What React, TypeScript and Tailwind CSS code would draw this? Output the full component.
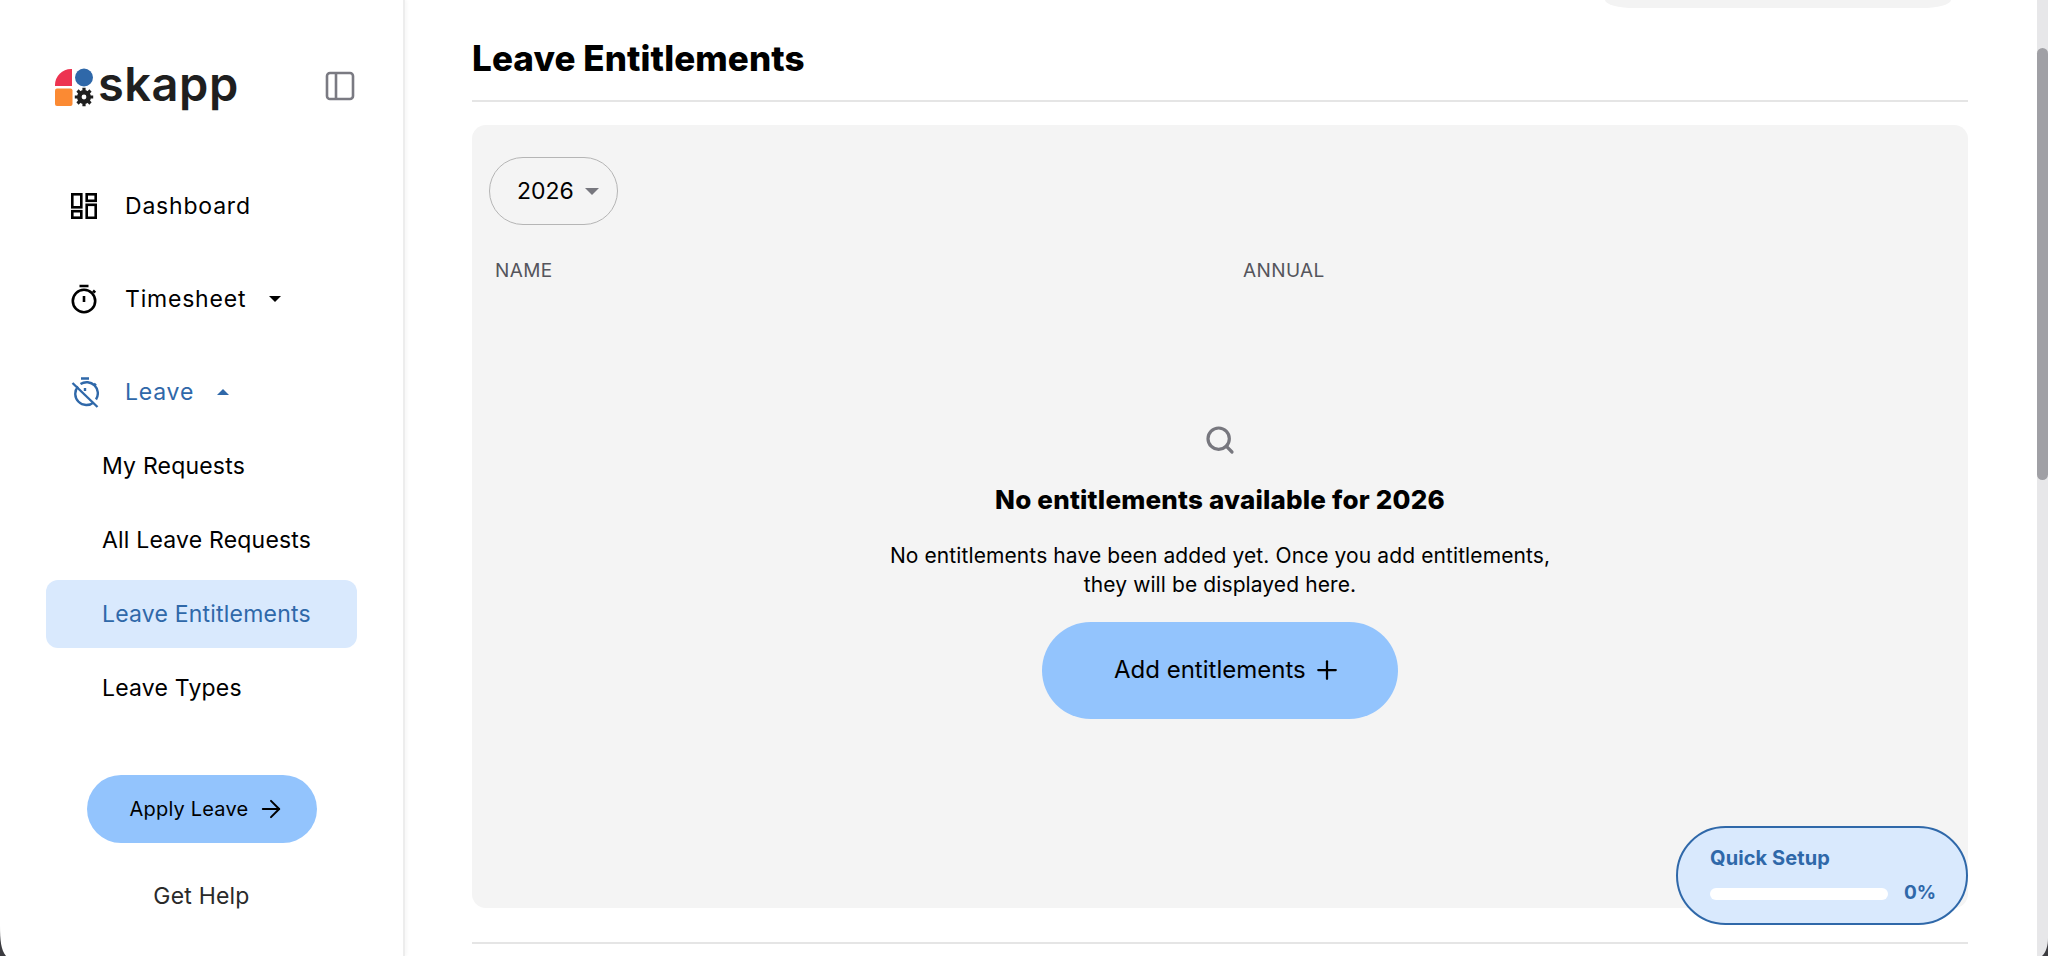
import { ArrowRight, Plus, Search } from "lucide-react";

const font = "font-['Inter','Liberation_Sans',sans-serif]";

function SkappLogo() {
  return (
    <svg width="40" height="40" viewBox="0 0 40 40" className="shrink-0 translate-y-[2px]">
      <path d="M1 18V17A16 16 0 0 1 17 1H18V18Z" fill="#ED3350" />
      <rect x="1" y="20.5" width="17.5" height="17.5" rx="2" fill="#FB8A33" />
      <circle cx="30" cy="9.500" r="9" fill="#2F68A9" />
      <circle cx="30" cy="29" r="4.700" fill="none" stroke="#1F1F1F" strokeWidth="4.600" />
      <path
        d="M30 19.800v4M30 34.200v4M20.800 29h4M35.200 29h4M23.500 22.500l2.800 2.800M33.700 32.700l2.800 2.800M23.500 35.500l2.800-2.800M33.700 25.300l2.800-2.800"
        stroke="#1F1F1F"
        strokeWidth="3.200"
      />
    </svg>
  );
}

function PanelIcon() {
  return (
    <svg width="30" height="30" viewBox="0 0 30 30" fill="none" stroke="#7A7A82" strokeWidth="2.600">
      <rect x="2" y="2" width="26" height="26" rx="3" />
      <path d="M11 2v26" />
    </svg>
  );
}

function DashboardIcon() {
  return (
    <svg width="26" height="26" viewBox="0 0 26 26" fill="none" stroke="#000" strokeWidth="2.600">
      <rect x="1.300" y="1.300" width="9" height="13" />
      <rect x="15.700" y="1.300" width="9" height="6.500" />
      <rect x="1.300" y="18.200" width="9" height="6.500" />
      <rect x="15.700" y="11.800" width="9" height="13" />
    </svg>
  );
}

function TimerIcon() {
  return (
    <svg width="26" height="30" viewBox="0 0 26 30" fill="none" stroke="#000" strokeWidth="2.600">
      <circle cx="13" cy="17" r="11.200" />
      <path d="M8.500 2h9M13 12v6M22 6.500l2.200 2.200" />
    </svg>
  );
}

function TimerOffIcon() {
  return (
    <svg width="28" height="32" viewBox="0 0 28 32" fill="none" stroke="#2F68A9" strokeWidth="2.400">
      <path d="M10 2.500h8M14 12v3M23 7.500l2 2" />
      <path d="M7 10.500a11.200 11.200 0 0 0 15.800 15.800M25 23.500A11.200 11.200 0 0 0 9.500 8" />
      <path d="M1.500 7l25 24" />
    </svg>
  );
}

function Caret({ up, color, size = 12 }: { up?: boolean; color: string; size?: number }) {
  return (
    <svg width={size} height={size / 2} viewBox="0 0 12 6" fill={color}>
      <path d={up ? "M0 6 6 0l6 6Z" : "M0 0h12L6 6Z"} />
    </svg>
  );
}

function NavItem({
  icon,
  label,
  active,
  open,
  caret = true,
}: {
  icon: React.ReactNode;
  label: string;
  active?: boolean;
  open?: boolean;
  caret?: boolean;
}) {
  return (
    <div className={`flex h-[66px] items-center pl-[71px] ${active ? "text-[#2F68A9]" : "text-black"}`}>
      <span className="flex w-[54px] items-center">{icon}</span>
      <span className="text-[23px] tracking-[0.8px]">{label}</span>
      {caret && (
        <span className="ml-[23px] flex">
          <Caret up={open} color={active ? "#2F68A9" : "#000"} />
        </span>
      )}
    </div>
  );
}

function SubItem({ label, active }: { label: string; active?: boolean }) {
  return (
    <div
      className={`flex h-[68px] items-center rounded-[12px] pl-[56px] text-[23px] tracking-[0.2px] ${
        active ? "bg-[#D9E9FD] text-[#2F68A9]" : "text-black"
      }`}
    >
      {label}
    </div>
  );
}

function Sidebar() {
  return (
    <aside className="flex h-full w-[405px] shrink-0 flex-col border-r-2 border-[#EDEDED] bg-white shadow-[2px_0_3px_rgba(0,0,0,0.03)]">
      <div className="flex items-center justify-between pt-[66px] pl-[54px] pr-[48px]">
        <div className="flex items-center gap-[4px]">
          <SkappLogo />
          <span className="-translate-y-[2px] text-[47px] leading-[40px] font-semibold tracking-[0.5px] text-[#1F1F1F]">
            skapp
          </span>
        </div>
        <PanelIcon />
      </div>
      <nav className="mt-[67px] flex flex-col gap-[27px]">
        <NavItem icon={<DashboardIcon />} label="Dashboard" caret={false} />
        <NavItem icon={<TimerIcon />} label="Timesheet" />
        <NavItem icon={<TimerOffIcon />} label="Leave" active open />
      </nav>
      <div className="mt-[7px] flex flex-col gap-[6px] px-[46px]">
        <SubItem label="My Requests" />
        <SubItem label="All Leave Requests" />
        <SubItem label="Leave Entitlements" active />
        <SubItem label="Leave Types" />
      </div>
      <button className="mx-auto mt-[53px] flex h-[68px] w-[230px] items-center gap-[9px] rounded-full bg-[#93C4FD] pl-[43px] text-[20px] tracking-[0.2px] text-black">
        Apply Leave
        <ArrowRight size={28} strokeWidth={1.700} />
      </button>
      <div className="mt-[36px] text-center text-[23px] tracking-[0.2px] text-[#2A2A2A]">Get Help</div>
    </aside>
  );
}

function EmptyState() {
  return (
    <div className="mt-[138px] flex flex-col items-center text-center">
      <Search size={32} strokeWidth={2.400} color="#77777E" />
      <h2 className="mt-[24px] text-[26px] font-extrabold tracking-[0.2px] text-black">
        No entitlements available for 2026
      </h2>
      <p className="mt-[22px] text-[21px] leading-[29px] tracking-[0.1px] text-black">
        No entitlements have been added yet. Once you add entitlements,
        <br />
        they will be displayed here.
      </p>
      <button className="mt-[23px] flex h-[97px] w-[356px] items-center gap-[6px] rounded-full bg-[#93C4FD] pl-[72px] text-[24px] text-black">
        Add entitlements
        <Plus size={30} strokeWidth={1.800} />
      </button>
    </div>
  );
}

function QuickSetup() {
  return (
    <div className="absolute right-[80px] bottom-[31px] flex h-[99px] w-[292px] flex-col justify-center rounded-full border-2 border-[#2F68A9] bg-[#D9E9FD] pr-[24px] pl-[32px]">
      <div className="text-[20px] font-bold tracking-[0.1px] text-[#2F68A9]">Quick Setup</div>
      <div className="mt-[6px] flex items-center gap-[16px]">
        <div className="h-[12px] w-[178px] shrink-0 rounded-full bg-white" />
        <span className="text-[19px] font-bold text-[#2F68A9]">0%</span>
      </div>
    </div>
  );
}

function WindowCorners() {
  return (
    <>
      <svg className="absolute bottom-0 left-0" width="8" height="30" viewBox="0 0 8 30" fill="#3C3C40">
        <path d="M0 0C0 14 1 24 6 30H0Z" />
      </svg>
      <svg className="absolute right-0 bottom-0" width="6" height="18" viewBox="0 0 6 18" fill="#3C3C40">
        <path d="M6 0C6 8 4 14 0 18H6Z" />
      </svg>
    </>
  );
}

export default function App() {
  return (
    <div className={`relative flex h-[956px] w-[2048px] overflow-hidden bg-white ${font}`}>
      <Sidebar />
      <main className="flex h-full flex-1 flex-col pr-[69px] pl-[67px]">
        <div className="mr-[17px] ml-auto h-[8px] w-[346px] rounded-b-[30px_8px] bg-[#F3F3F3]" />
        <h1 className="mt-[28px] text-[35px] leading-[44px] font-extrabold tracking-[0.1px] text-black">
          Leave Entitlements
        </h1>
        <div className="mt-[20px] h-[2px] bg-[#E5E5E5]" />
        <section className="mt-[23px] h-[783px] rounded-[14px] bg-[#F4F4F4] px-[17px] pt-[32px]">
          <button className="flex h-[68px] w-[129px] items-center gap-[11px] rounded-full border border-[#B5B5B5] pl-[27px] text-[23px] text-black">
            2026
            <Caret color="#77777E" size={14} />
          </button>
          <div className="mt-[32px] flex pl-[6px] text-[19px] tracking-[0.4px] text-[#55555C]">
            <span className="w-[748px]">NAME</span>
            <span>ANNUAL</span>
          </div>
          <EmptyState />
        </section>
        <div className="mt-[34px] h-[2px] bg-[#E5E5E5]" />
      </main>
      <QuickSetup />
      <div className="flex h-full w-[11px] shrink-0 flex-col bg-[#E7E7E9] pt-[48px]">
        <div className="h-[432px] rounded-full bg-[#A0A0A5]" />
      </div>
      <WindowCorners />
    </div>
  );
}
